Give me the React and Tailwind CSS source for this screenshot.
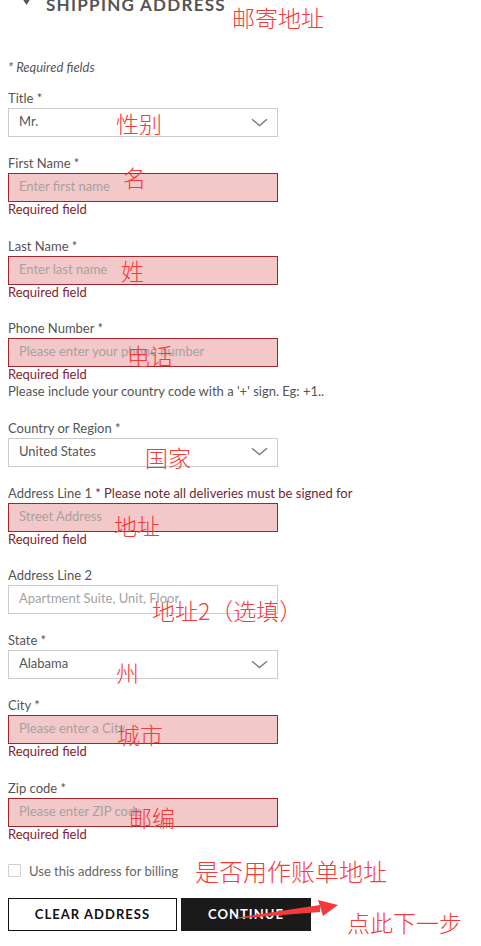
import React from "react";

const Chevron = () => (
  <svg width="17" height="9" viewBox="0 0 17 9" className="shrink-0">
    <path d="M1 1.2 L8.5 7.5 L16 1.2" fill="none" stroke="#7a7a7a" strokeWidth="1.4" />
  </svg>
);

function Label({ children }) {
  return <div className="text-[13px] leading-[16px] mb-[2px] text-[#555]">{children}</div>;
}

function Field({ label, placeholder, value, select, error, hint, last }) {
  const boxBase = "w-[270px] h-[29px] border flex items-center pl-[10px] pr-[9px] pb-[1px] text-[13px]";
  const box = error
    ? `${boxBase} border-[#a3242a] bg-[#f3c8c8]`
    : `${boxBase} border-[#cccccc] bg-white`;
  return (
    <div className={error ? "" : "pb-[18px]"}>
      <Label>{label}</Label>
      <div className={box}>
        {value ? (
          <span className="flex-1 text-[#555]">{value}</span>
        ) : (
          <span className="flex-1 text-[#a6a2a2]">{placeholder}</span>
        )}
        {select && <Chevron />}
      </div>
      {error && (
        <div className={last ? "" : "pb-[21.5px]"}>
          <div className="text-[13px] leading-[14px] text-[#861d2e]">Required field</div>
          {hint && (
            <div className="mt-[3px] text-[13px] leading-[14px] text-[#555]">{hint}</div>
          )}
        </div>
      )}
    </div>
  );
}

const Note = ({ x, y, size = 23, children }) => (
  <span
    className="absolute whitespace-nowrap leading-none text-[#f63a3a] font-['Noto_Sans_CJK_SC',sans-serif] font-light"
    style={{ left: x, top: y, fontSize: size }}
  >
    {children}
  </span>
);

export default function App() {
  return (
    <div className="relative w-[481px] h-[946px] overflow-hidden bg-white font-['Lato',sans-serif] text-[#555]">
      <div className="-mt-[5px] h-[20px] flex items-start pl-[22px]">
        <svg width="9" height="7" viewBox="0 0 9 7" className="mt-[3px] shrink-0">
          <polygon points="0,0 9,0 4.5,7" fill="#555" />
        </svg>
        <div className="ml-[15px] text-[17px] leading-[20px] font-bold tracking-[0.075em] text-[#555]">
          SHIPPING ADDRESS
        </div>
      </div>

      <div className="px-[8px]">
        <div className="mt-[44px] text-[13px] leading-[16px] italic text-[#555]">* Required fields</div>

        <div className="mt-[15px]">
          <Field label="Title *" value="Mr." select />
          <Field label="First Name *" placeholder="Enter first name" error />
          <Field label="Last Name *" placeholder="Enter last name" error />
          <Field
            label="Phone Number *"
            placeholder="Please enter your phone number"
            error
            hint="Please include your country code with a '+' sign. Eg: +1.."
          />
          <Field label="Country or Region *" value="United States" select />
          <Field
            label={
              <>
                Address Line 1 <span className="text-[#6e2a33]">* Please note all deliveries must be signed for</span>
              </>
            }
            placeholder="Street Address"
            error
          />
          <Field label="Address Line 2" placeholder="Apartment Suite, Unit, Floor" />
          <Field label="State *" value="Alabama" select />
          <Field label="City *" placeholder="Please enter a City" error />
          <Field label="Zip code *" placeholder="Please enter ZIP code" error last />
        </div>

        <div className="mt-[23.5px] h-[13px] flex items-center gap-[8px]">
          <div className="w-[13px] h-[13px] border border-[#cfcfcf] rounded-[1px] bg-white shrink-0" />
          <span className="text-[13px] leading-[16px] text-[#666]">Use this address for billing</span>
        </div>

        <div className="mt-[21px] flex gap-[4px]">
          <button className="w-[169px] h-[33px] border border-[#111] bg-white text-[13px] font-bold tracking-[0.08em] text-[#111] flex items-center justify-center">
            CLEAR ADDRESS
          </button>
          <button className="w-[130px] h-[33px] bg-[#1a1a1a] text-[13px] font-bold tracking-[0.08em] text-white flex items-center justify-center">
            CONTINUE
          </button>
        </div>
      </div>

      <Note x={232} y={6}>邮寄地址</Note>
      <Note x={116} y={112}>性别</Note>
      <Note x={123} y={166}>名</Note>
      <Note x={121} y={259}>姓</Note>
      <Note x={127} y={344}>电话</Note>
      <Note x={145} y={446}>国家</Note>
      <Note x={114} y={514}>地址</Note>
      <Note x={152} y={599}>地址2（选填）</Note>
      <Note x={116} y={661}>州</Note>
      <Note x={117} y={723}>城市</Note>
      <Note x={129} y={806}>邮编</Note>
      <Note x={195} y={859} size={24}>是否用作账单地址</Note>
      <Note x={347} y={911}>点此下一步</Note>

      <svg className="absolute left-[230px] top-[893px]" width="115" height="30" viewBox="0 0 115 30">
        <polygon points="7,24.5 90,12 90,19 7,25.5" fill="#f63a3a" />
        <polygon points="88,7 108,12 93,23" fill="#f63a3a" />
      </svg>
    </div>
  );
}
